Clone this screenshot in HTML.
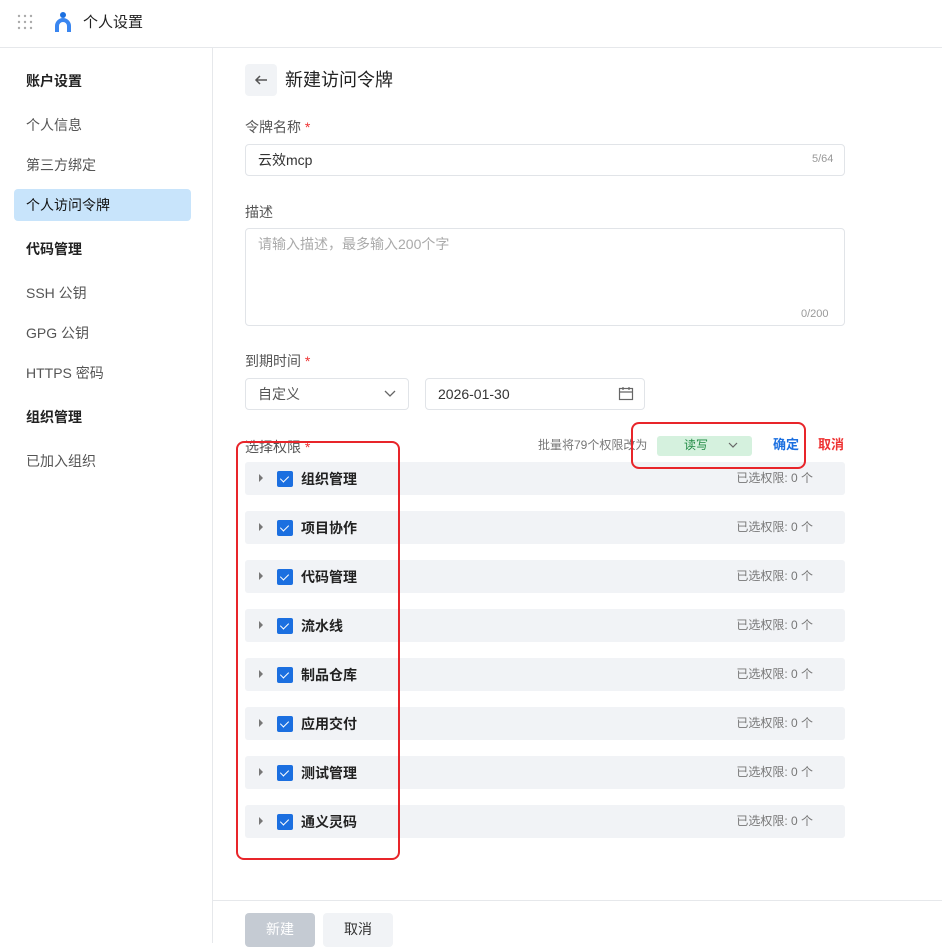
<!DOCTYPE html>
<html><head><meta charset="utf-8"><style>
*{margin:0;padding:0;box-sizing:border-box}
body{width:942px;height:943px;overflow:hidden;background:#fff;font-family:"Liberation Sans","Noto Sans CJK SC",sans-serif;color:#1f2329;position:relative;line-height:1.15}
.a{position:absolute}
.t{font-size:14px;white-space:nowrap}
.nav{left:26px;font-size:14px;color:#555}
.navh{left:26px;font-size:14px;font-weight:bold;color:#222}
.inp{border:1px solid #e1e4e8;border-radius:4px;background:#fff}
.row{left:245px;width:600px;height:33px;background:#f1f3f6;border-radius:3px}
.row .tri{position:absolute;left:14px;top:12px;width:0;height:0;border-left:4px solid #777;border-top:4px solid transparent;border-bottom:4px solid transparent}
.row .cb{position:absolute;left:32px;top:9px;width:16px;height:16px;background:#1b6fe0;border-radius:2px}
.row .cb:after{content:"";position:absolute;left:5px;top:3px;width:4px;height:7px;border:solid #fff;border-width:0 1.5px 1.5px 0;transform:rotate(45deg)}
.row .n{position:absolute;left:56px;top:9px;font-size:14px;font-weight:bold;color:#222}
.row .c{position:absolute;right:32px;top:9px;font-size:12px;line-height:14px;color:#777}
</style></head><body>
<div class="a" style="left:0;top:47px;width:942px;height:1px;background:#e6e8eb"></div>
<div class="a" style="left:212px;top:48px;width:1px;height:895px;background:#e6e8eb"></div>
<svg class="a" style="left:17px;top:14px" width="16" height="16"><g fill="#aaa"><circle cx="2" cy="2" r="1.2"/><circle cx="8" cy="2" r="1.2"/><circle cx="14" cy="2" r="1.2"/><circle cx="2" cy="8" r="1.2"/><circle cx="8" cy="8" r="1.2"/><circle cx="14" cy="8" r="1.2"/><circle cx="2" cy="14" r="1.2"/><circle cx="8" cy="14" r="1.2"/><circle cx="14" cy="14" r="1.2"/></g></svg>
<svg class="a" style="left:53px;top:11px" width="20" height="22"><circle cx="10" cy="4" r="3" fill="#1b6fe0"/><path d="M2 21V15a8 8 0 0 1 16 0v6h-4v-6a4 4 0 0 0-8 0v6z" fill="#3a86f0"/></svg>
<div class="a t" style="left:83px;top:14px;font-size:15px;color:#222">个人设置</div>

<div class="a navh" style="top:73px">账户设置</div>
<div class="a nav" style="top:117px">个人信息</div>
<div class="a nav" style="top:157px">第三方绑定</div>
<div class="a" style="left:14px;top:189px;width:177px;height:32px;background:#c8e4fb;border-radius:4px"></div>
<div class="a navh" style="top:197px;font-weight:normal;color:#111">个人访问令牌</div>
<div class="a navh" style="top:241px">代码管理</div>
<div class="a nav" style="top:285px">SSH 公钥</div>
<div class="a nav" style="top:325px">GPG 公钥</div>
<div class="a nav" style="top:365px">HTTPS 密码</div>
<div class="a navh" style="top:409px">组织管理</div>
<div class="a nav" style="top:453px">已加入组织</div>

<div class="a" style="left:245px;top:64px;width:32px;height:32px;background:#f1f3f6;border-radius:4px"></div>
<svg class="a" style="left:253px;top:72px" width="16" height="16"><path d="M14 8H3M7 4L3 8l4 4" stroke="#555" stroke-width="1.5" fill="none"/></svg>
<div class="a t" style="left:285px;top:70px;font-size:18px;color:#222">新建访问令牌</div>

<div class="a t" style="left:245px;top:119px;color:#555">令牌名称 <span style="color:#e33">*</span></div>
<div class="a inp" style="left:245px;top:144px;width:600px;height:32px"></div>
<div class="a t" style="left:258px;top:152px;color:#333">云效mcp</div>
<div class="a" style="left:812px;top:153px;font-size:11px;color:#999">5/64</div>

<div class="a t" style="left:245px;top:204px;color:#555">描述</div>
<div class="a inp" style="left:245px;top:228px;width:600px;height:98px"></div>
<div class="a t" style="left:258px;top:236px;color:#aaa">请输入描述，最多输入200个字</div>
<div class="a" style="left:801px;top:308px;font-size:11px;color:#999">0/200</div>

<div class="a t" style="left:245px;top:353px;color:#555">到期时间 <span style="color:#e33">*</span></div>
<div class="a inp" style="left:245px;top:378px;width:164px;height:32px"></div>
<div class="a t" style="left:258px;top:386px;color:#555">自定义</div>
<svg class="a" style="left:384px;top:389px" width="12" height="10"><path d="M1 2l5 5 5-5" stroke="#666" stroke-width="1.3" fill="none"/></svg>
<div class="a inp" style="left:425px;top:378px;width:220px;height:32px"></div>
<div class="a t" style="left:438px;top:386px;color:#333">2026-01-30</div>
<svg class="a" style="left:618px;top:386px" width="16" height="16"><rect x="1.5" y="2.5" width="13" height="11" fill="none" stroke="#666" stroke-width="1.2"/><path d="M1.5 6h13M5 1v3M11 1v3" stroke="#666" stroke-width="1.2"/></svg>

<div class="a t" style="left:245px;top:439px;color:#555">选择权限 <span style="color:#e33">*</span></div>
<div class="a" style="left:538px;top:439px;font-size:12px;color:#777">批量将79个权限改为</div>
<div class="a" style="left:657px;top:436px;width:95px;height:20px;background:#d5f1de;border-radius:3px"></div>
<div class="a" style="left:684px;top:439px;font-size:12px;color:#1f8a43">读写</div>
<svg class="a" style="left:728px;top:441px" width="10" height="8"><path d="M1 2l4 4 4-4" stroke="#666" stroke-width="1.2" fill="none"/></svg>
<div class="a t" style="left:773px;top:438px;color:#1b6fe0;font-weight:bold;font-size:13px">确定</div>
<div class="a t" style="left:818px;top:438px;color:#e33;font-weight:bold;font-size:13px">取消</div>

<div class="a row" style="top:462px"><i class="tri"></i><i class="cb"></i><span class="n">组织管理</span><span class="c">已选权限: 0 个</span></div>
<div class="a row" style="top:511px"><i class="tri"></i><i class="cb"></i><span class="n">项目协作</span><span class="c">已选权限: 0 个</span></div>
<div class="a row" style="top:560px"><i class="tri"></i><i class="cb"></i><span class="n">代码管理</span><span class="c">已选权限: 0 个</span></div>
<div class="a row" style="top:609px"><i class="tri"></i><i class="cb"></i><span class="n">流水线</span><span class="c">已选权限: 0 个</span></div>
<div class="a row" style="top:658px"><i class="tri"></i><i class="cb"></i><span class="n">制品仓库</span><span class="c">已选权限: 0 个</span></div>
<div class="a row" style="top:707px"><i class="tri"></i><i class="cb"></i><span class="n">应用交付</span><span class="c">已选权限: 0 个</span></div>
<div class="a row" style="top:756px"><i class="tri"></i><i class="cb"></i><span class="n">测试管理</span><span class="c">已选权限: 0 个</span></div>
<div class="a row" style="top:805px"><i class="tri"></i><i class="cb"></i><span class="n">通义灵码</span><span class="c">已选权限: 0 个</span></div>

<div class="a" style="left:236px;top:441px;width:164px;height:419px;border:2.5px solid #e8252a;border-radius:8px"></div>
<div class="a" style="left:631px;top:422px;width:175px;height:47px;border:2.5px solid #e8252a;border-radius:8px"></div>

<div class="a" style="left:213px;top:900px;width:729px;height:1px;background:#e6e8eb"></div>
<div class="a" style="left:245px;top:913px;width:70px;height:34px;background:#c5cbd3;border-radius:4px;color:#fff;font-size:14px;text-align:center;line-height:32px">新建</div>
<div class="a" style="left:323px;top:913px;width:70px;height:34px;background:#f1f3f6;border-radius:4px;color:#333;font-size:14px;text-align:center;line-height:32px">取消</div>
</body></html>
